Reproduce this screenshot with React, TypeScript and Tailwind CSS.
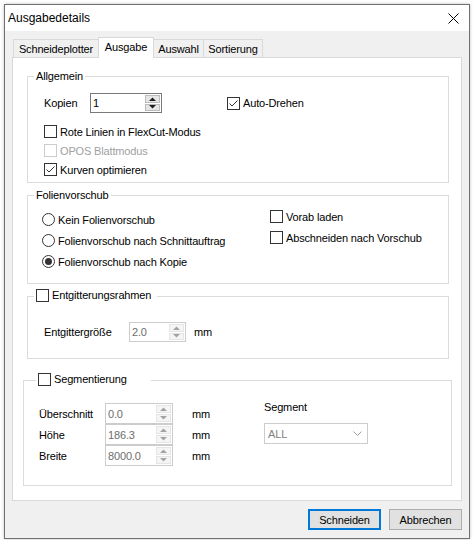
import clsx from "clsx";

// WinForms-Dialog "Ausgabedetails", Tab "Ausgabe"

function Box({ checked, disabled }: { checked?: boolean; disabled?: boolean }) {
  return (
    <span
      className={clsx(
        "flex h-[13px] w-[13px] shrink-0 items-center justify-center border bg-white",
        disabled ? "border-[#cccccc]" : "border-[#333333]"
      )}
    >
      {checked && (
        <svg width="11" height="11" viewBox="0 0 11 11">
          <path d="M1.5 5.5L4 8l5.5-5.5" fill="none" stroke="#333333" strokeWidth="1" />
        </svg>
      )}
    </span>
  );
}

function Radio({ checked }: { checked?: boolean }) {
  return (
    <span className="flex h-[13px] w-[13px] shrink-0 items-center justify-center rounded-full border border-[#333333] bg-white">
      {checked && <span className="h-[7px] w-[7px] rounded-full bg-[#333333]" />}
    </span>
  );
}

function Arrow({ up, disabled }: { up?: boolean; disabled?: boolean }) {
  return (
    <svg width="7" height="4" viewBox="0 0 7 4">
      <path d={up ? "M0 4L3.5 0.5L7 4Z" : "M0 0L3.5 3.5L7 0Z"} fill={disabled ? "#a3a3a3" : "#1e1e1e"} />
    </svg>
  );
}

function Spin({ value, className, disabled }: { value: string; className: string; disabled?: boolean }) {
  return (
    <div
      className={clsx(
        "flex shrink-0 border bg-white",
        disabled ? "border-[#cccccc] text-[#6d6d6d]" : "border-[#7a7a7a] text-black",
        className
      )}
    >
      <div className="flex flex-1 items-center pl-[2px]">{value}</div>
      <div className="flex w-[17px] flex-col gap-px p-px">
        <div
          className={clsx(
            "flex flex-1 items-center justify-center border",
            disabled ? "border-[#e5e5e5] bg-[#f5f5f5]" : "border-[#bcbcbc] bg-[#e6e6e6]"
          )}
        >
          <Arrow up disabled={disabled} />
        </div>
        <div
          className={clsx(
            "flex flex-1 items-center justify-center border",
            disabled ? "border-[#e5e5e5] bg-[#f5f5f5]" : "border-[#bcbcbc] bg-[#e6e6e6]"
          )}
        >
          <Arrow disabled={disabled} />
        </div>
      </div>
    </div>
  );
}

function Check({ label, checked, disabled, tall }: { label: string; checked?: boolean; disabled?: boolean; tall?: boolean }) {
  return (
    <div className={clsx("flex items-center gap-[3px]", tall ? "h-[21px]" : "h-[19px]")}>
      <Box checked={checked} disabled={disabled} />
      <span className={disabled ? "text-[#a0a0a0]" : ""}>{label}</span>
    </div>
  );
}

function Option({ label, checked }: { label: string; checked?: boolean }) {
  return (
    <div className="flex h-[21px] items-center gap-[3px]">
      <Radio checked={checked} />
      <span>{label}</span>
    </div>
  );
}

function Legend({ children }: { children: React.ReactNode }) {
  return (
    <span className="absolute left-[6px] top-[-8px] bg-white px-[2px] leading-[14px]">{children}</span>
  );
}

export default function App() {
  const tabs = ["Schneideplotter", "Ausgabe", "Auswahl", "Sortierung"];

  return (
    <div className="h-[540px] w-[474px] bg-white pl-[4px] pt-[4px] font-['Liberation_Sans',Arial,sans-serif] text-[11px] leading-[14px] tracking-[-0.15px] text-black">
      <div className="flex h-[535px] w-[466px] flex-col border border-[#707070] shadow-[0_0_3px_rgba(0,0,0,0.25)]">
        {/* Titelleiste */}
        <div className="flex h-[26px] items-center justify-between bg-white pl-[3px] pr-[10px] text-[12px] tracking-normal">
          <span>Ausgabedetails</span>
          <svg width="11" height="11" viewBox="0 0 11 11">
            <path d="M0.5 0.5L10.5 10.5M10.5 0.5L0.5 10.5" stroke="#000" strokeWidth="1" />
          </svg>
        </div>

        <div className="flex flex-1 flex-col bg-[#f0f0f0] pl-[7px] pt-[6px]">
          {/* Reiter */}
          <div className="flex items-end pl-px">
            {tabs.map((t, i) => (
              <div
                key={t}
                className={clsx(
                  "flex items-center justify-center border-[#d9d9d9]",
                  i === 1
                    ? "relative z-10 -mb-px h-[21px] border-x border-t bg-white pb-[2px]"
                    : "h-[18px] border-t bg-[#f0f0f0]",
                  i === 0 && "w-[85px] border-l",
                  i === 1 && "w-[56px]",
                  i === 2 && "w-[50px] border-r",
                  i === 3 && "w-[59px] border-r"
                )}
              >
                {t}
              </div>
            ))}
          </div>

          {/* Reiterseite */}
          <div className="flex h-[444px] w-[450px] flex-col border border-[#d9d9d9] bg-white">
            {/* Allgemein */}
            <div className="relative ml-[14px] mt-[18px] h-[107px] w-[422px] border border-[#dcdcdc] pl-[16px]">
              <Legend>Allgemein</Legend>
              <div className="mt-[16px] flex h-[20px] items-center">
                <span className="w-[46px]">Kopien</span>
                <Spin value="1" className="h-[20px] w-[72px]" />
                <div className="ml-[65px]">
                  <Check label="Auto-Drehen" checked />
                </div>
              </div>
              <div className="mt-[9px] flex flex-col">
                <Check label="Rote Linien in FlexCut-Modus" />
                <Check label="OPOS Blattmodus" disabled />
                <Check label="Kurven optimieren" checked />
              </div>
            </div>

            {/* Folienvorschub */}
            <div className="relative ml-[14px] mt-[12px] flex h-[89px] w-[422px] border border-[#dcdcdc]">
              <Legend>Folienvorschub</Legend>
              <div className="flex w-[242px] flex-col pl-[14px] pt-[13px]">
                <Option label="Kein Folienvorschub" />
                <Option label="Folienvorschub nach Schnittauftrag" />
                <Option label="Folienvorschub nach Kopie" checked />
              </div>
              <div className="flex flex-col pt-[10px]">
                <Check label="Vorab laden" tall />
                <Check label="Abschneiden nach Vorschub" tall />
              </div>
            </div>

            {/* Entgitterungsrahmen */}
            <div className="relative ml-[14px] mt-[12px] h-[63px] w-[422px] border border-[#dcdcdc] pl-[16px]">
              <span className="absolute left-[6px] top-[-9px] flex h-[14px] w-[123px] items-center gap-[3px] bg-white pl-[2px]">
                <Box />
                <span>Entgitterungsrahmen</span>
              </span>
              <div className="mt-[25px] flex h-[20px] items-center">
                <span className="w-[85px]">Entgittergröße</span>
                <Spin value="2.0" className="h-[20px] w-[57px]" disabled />
                <span className="ml-[8px]">mm</span>
              </div>
            </div>

            {/* Segmentierung */}
            <div className="relative ml-[10px] mt-[21px] flex h-[106px] w-[429px] border border-[#dcdcdc]">
              <span className="absolute left-[12px] top-[-9px] flex h-[14px] w-[115px] items-center gap-[3px] bg-white pl-[2px]">
                <Box />
                <span>Segmentierung</span>
              </span>
              <div className="flex w-[240px] flex-col pl-[15px] pt-[22px]">
                {[
                  ["Überschnitt", "0.0"],
                  ["Höhe", "186.3"],
                  ["Breite", "8000.0"],
                ].map(([l, v]) => (
                  <div key={l} className="flex h-[21px] items-center">
                    <span className="w-[66px]">{l}</span>
                    <Spin value={v} className="h-[21px] w-[68px]" disabled />
                    <span className="ml-[19px]">mm</span>
                  </div>
                ))}
              </div>
              <div className="flex flex-col pt-[19px]">
                <span>Segment</span>
                <div className="mt-[9px] flex h-[21px] w-[104px] items-center justify-between border border-[#cccccc] bg-white pl-[3px] pr-[5px] text-[#838383]">
                  <span>ALL</span>
                  <svg width="9" height="5" viewBox="0 0 9 5">
                    <path d="M0.5 0.5L4.5 4.5L8.5 0.5" fill="none" stroke="#a0a0a0" strokeWidth="1" />
                  </svg>
                </div>
              </div>
            </div>
          </div>

          {/* Schaltflächen */}
          <div className="mt-[8px] flex w-[450px] justify-end gap-[8px]">
            <button className="flex h-[21px] w-[73px] items-center justify-center border-2 border-[#0078d7] bg-[#e1e1e1]">
              Schneiden
            </button>
            <button className="flex h-[21px] w-[73px] items-center justify-center border border-[#adadad] bg-[#e1e1e1]">
              Abbrechen
            </button>
          </div>
        </div>
      </div>
    </div>
  );
}
